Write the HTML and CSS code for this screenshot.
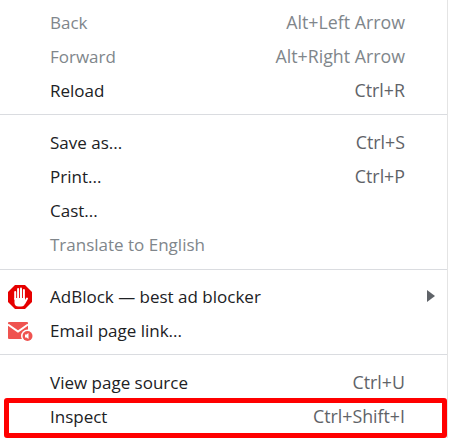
FILE: index.html
```html
<!DOCTYPE html>
<html lang="en">
<head>
    <meta charset="UTF-8">
    <title>Context menu</title>
    <link rel="stylesheet" href="styles.css">
</head>
<body>

<div class="menu">
    <div class="group">
        <div class="item disabled"><span>Back</span><span class="keys">Alt+Left Arrow</span></div>
        <div class="item disabled"><span>Forward</span><span class="keys">Alt+Right Arrow</span></div>
        <div class="item"><span>Reload</span><span class="keys">Ctrl+R</span></div>
    </div>
    <div class="group page">
        <div class="item"><span>Save as...</span><span class="keys">Ctrl+S</span></div>
        <div class="item"><span>Print...</span><span class="keys">Ctrl+P</span></div>
        <div class="item"><span>Cast...</span></div>
        <div class="item disabled"><span>Translate to English</span></div>
    </div>
    <div class="group extensions">
        <div class="item">
            <svg class="icon adblock" viewBox="0 0 24 24">
                <polygon points="7,0 17,0 24,7 24,17 17,24 7,24 0,17 0,7" fill="#e60000"/>
                <path d="M6.500 13h10.500v4.500a4 4 0 0 1-4 4h-2.500a4 4 0 0 1-4-4z" fill="#fff"/>
                <g stroke="#fff" stroke-width="2" stroke-linecap="round">
                    <line x1="7.200" y1="14" x2="7.200" y2="7"/>
                    <line x1="10.100" y1="13" x2="10.100" y2="4"/>
                    <line x1="13" y1="13" x2="13" y2="3.500"/>
                    <line x1="15.900" y1="13" x2="15.900" y2="5"/>
                    <line x1="16.500" y1="18" x2="19" y2="13.500"/>
                </g>
            </svg>
            <span>AdBlock — best ad blocker</span>
            <span class="arrow"></span>
        </div>
        <div class="item">
            <svg class="icon" viewBox="0 0 26 26">
                <rect x="0" y="4" width="20" height="17" rx="1" fill="#ef5350"/>
                <polyline points="0,6.500 10,13.500 20,6.500" fill="none" stroke="#fff" stroke-width="2"/>
                <circle cx="19.500" cy="18" r="6.500" fill="#fff"/>
                <circle cx="19.500" cy="18" r="5" fill="#ef5350"/>
                <path d="M17 16.500h1.500l2-1.500v6l-2-1.500H17z" fill="#fff"/>
            </svg>
            <span>Email page link...</span>
        </div>
    </div>
    <div class="group last">
        <div class="item"><span>View page source</span><span class="keys">Ctrl+U</span></div>
        <div class="item"><span>Inspect</span><span class="keys">Ctrl+Shift+I</span></div>
    </div>
    <div class="highlight"></div>
</div>

</body>
</html>
```

FILE: styles.css
```css
body {
    margin: 0;
    background-color: #fff;
    font-family: "Open Sans", "Noto Sans", sans-serif;
    font-size: 17px;
    color: #202124;
    overflow: hidden;
}
.menu {
    position: relative;
    width: 447px;
    height: 438px;
    border-right: 1px solid #e4e4e4;
}
.group {
    padding: 6px 0;
    margin-bottom: 5px;
    border-bottom: 1px solid #dadce0;
}
.group.page {
    padding-bottom: 7px;
}
.group.extensions {
    padding-top: 5px;
}
.group.last {
    border-bottom: none;
    margin-bottom: 0;
}
.item {
    position: relative;
    display: flex;
    justify-content: space-between;
    align-items: center;
    box-sizing: border-box;
    height: 34px;
    padding: 0 42px 2px 50px;
}
.keys {
    color: #5f6368;
    font-size: 17.8px;
}
.disabled, .disabled .keys {
    color: #80868b;
}
.icon {
    position: absolute;
    left: 8px;
    top: 4px;
    width: 26px;
    height: 26px;
}
.icon.adblock {
    top: 5px;
    width: 24px;
    height: 24px;
}
.arrow {
    border-left: 8px solid #5f6368;
    border-top: 6px solid transparent;
    border-bottom: 6px solid transparent;
    margin-right: -30px;
}
.highlight {
    position: absolute;
    left: 4px;
    top: 398px;
    width: 433px;
    height: 30px;
    border: 5px solid #f00;
    border-radius: 3px;
}
```
